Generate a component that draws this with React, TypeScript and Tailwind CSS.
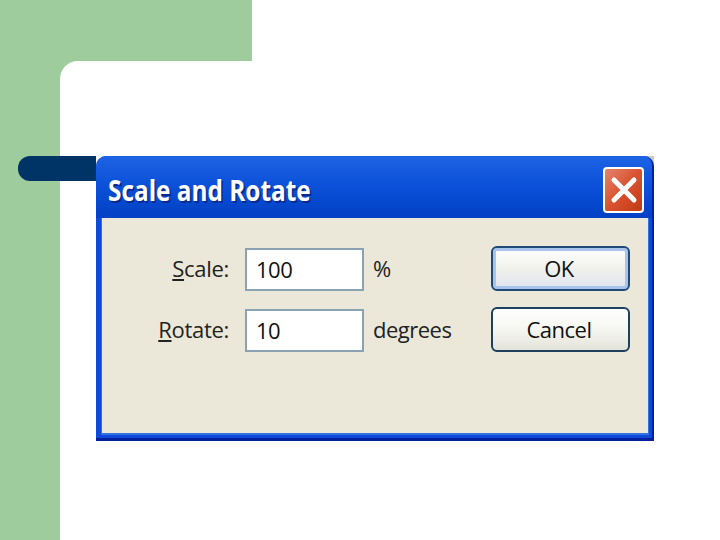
import React from 'react';

const font = "font-['Open_Sans','Liberation_Sans',sans-serif]";

const Field = ({ label, hotkey, value, unit }: { label: string; hotkey: string; value: string; unit: string }) => (
  <>
    <span className="mr-[16px] w-[127px] pb-[5px] text-right text-[22px] leading-[36px] tracking-[-0.3px] text-[#222]">
      <span className="underline decoration-2 underline-offset-2">{hotkey}</span>
      {label}
    </span>
    <div className="flex h-[43px] w-[119px] items-center border-2 border-[#8ba2b5] bg-white pl-[9px] text-[22px] tracking-[-0.5px] text-[#111]">
      {value}
    </div>
    <span className="w-[127px] pb-[5px] pl-[9px] text-[22px] leading-[36px] tracking-[-0.5px] text-[#222]">{unit}</span>
  </>
);

const DialogButton = ({ label, active }: { label: string; active?: boolean }) => (
  <button
    className={
      active
        ? 'h-[45px] w-[139px] rounded-[6px] border-2 border-[#1f4a78] bg-gradient-to-b from-white via-[#f1f1ec] to-[#dfe4ef] pr-[3px] text-[22px] tracking-[-0.5px] text-[#111] shadow-[inset_0_0_0_3px_#a9c4ea]'
        : 'h-[45px] w-[139px] rounded-[6px] border-2 border-[#1e3f5e] bg-gradient-to-b from-white via-[#f6f6f1] to-[#e4e3da] pr-[3px] text-[22px] tracking-[-0.5px] text-[#111]'
    }
  >
    {label}
  </button>
);

export default function App() {
  return (
    <div className={`flex h-[540px] w-[720px] overflow-hidden bg-white ${font}`}>
      <div className="w-[60px] bg-[#9fcc9d]" />
      <div className="flex flex-1 flex-col">
        <div className="h-[61px] w-[192px] bg-[#9fcc9d]" />
        <div className="h-[18px] w-[18px] bg-[#9fcc9d]">
          <div className="h-full w-full rounded-tl-[18px] bg-white" />
        </div>
        <div className="ml-[-42px] mt-[77px] flex items-start">
          <div className="h-[25px] w-[78px] rounded-l-[12px] bg-[#003366]" />
          <div className="h-[285px] w-[558px] bg-[linear-gradient(to_left,#c9c9c4_10px,transparent_10px)]">
            <div className="flex h-full flex-col overflow-hidden rounded-t-[10px] border-b-[3px] border-r-[2px] border-[#03209c] bg-[#0f49d8]">
              <div className="flex h-[62px] shrink-0 items-center justify-between bg-gradient-to-b from-[#1d63e4] via-[#0a50d8] to-[#0340c4] pl-[12px] pr-[8px]">
                <span className="mt-[4px] origin-left scale-x-[0.84] text-[29px] font-bold leading-none text-white [text-shadow:2px_2px_0_#0a2a90]">
                  Scale and Rotate
                </span>
                <div className="mt-[6px] flex h-[46px] w-[41px] items-center justify-center rounded-[4px] border-2 border-white bg-gradient-to-br from-[#e2836a] via-[#d9512f] to-[#c23a12]">
                  <svg width="30" height="30" viewBox="0 0 30 30">
                    <path d="M5 5 L25 25 M25 5 L5 25" stroke="#fff" strokeWidth="5" strokeLinecap="round" />
                  </svg>
                </div>
              </div>
              <div className="ml-[5px] mr-[3px] mb-[3px] flex-1 border-x border-b-2 border-[#2f72e0] bg-[#ebe8d9] pt-[28px]">
                <div className="grid grid-cols-[auto_auto_auto_auto] items-end justify-start gap-y-[16px]">
                  <Field label="cale:" hotkey="S" value="100" unit="%" />
                  <DialogButton label="OK" active />
                  <Field label="otate:" hotkey="R" value="10" unit="degrees" />
                  <DialogButton label="Cancel" />
                </div>
              </div>
            </div>
          </div>
        </div>
      </div>
    </div>
  );
}
